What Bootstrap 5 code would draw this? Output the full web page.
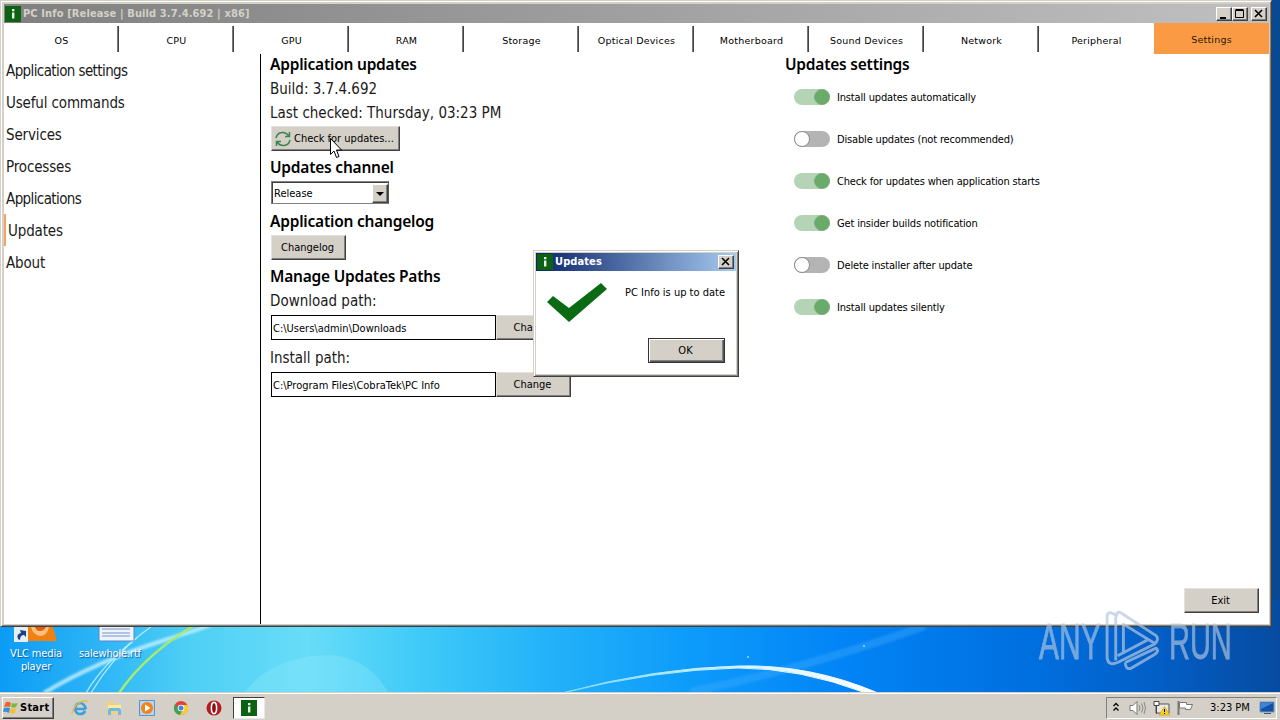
<!DOCTYPE html>
<html lang="en">
<head>
    <meta charset="UTF-8">
    <meta name="viewport" content="width=device-width, initial-scale=1.0">
    <title>PC Info</title>
    <link href="https://cdn.jsdelivr.net/npm/bootstrap@5.3.2/dist/css/bootstrap.min.css" rel="stylesheet">
    <style>
        body {
            width: 1280px;
            height: 720px;
            overflow: hidden;
            font-family: "DejaVu Sans Condensed", "DejaVu Sans", sans-serif;
            font-stretch: condensed;
            font-size: 11px;
            line-height: 14px;
            color: #000;
            background: #0b4a94;
        }
        .desktop { height: 692px; }
        .wallpaper { left: 0; top: 0; }
        .window {
            background: #d4d0c8;
            border: 1px solid;
            border-color: #d4d0c8 #404040 #404040 #d4d0c8;
            box-shadow: inset 1px 1px #fff, inset -1px -1px #808080;
        }
        .app-window { left: 0; top: 0; width: 1272px; height: 627px; padding: 3px 2px 3px 3px; }
        .titlebar {
            height: 18px;
            font-weight: bold;
            font-size: 11px;
        }
        .titlebar-off { height: 19px; background: linear-gradient(90deg, #808080, #c0c0c0); color: #d4d0c8; }
        .titlebar-on { background: linear-gradient(90deg, #0a246a, #a6caf0); color: #fff; }
        .app-title { margin-left: 1px; letter-spacing: .12px; }
        .dialog-title { margin-left: 1px; letter-spacing: .1px; }
        .win-btn {
            width: 16px;
            height: 14px;
            background: #d4d0c8;
            border: 1px solid;
            border-color: #fff #404040 #404040 #fff;
            box-shadow: inset -1px -1px #808080;
        }
        .win-close { margin-left: 3px; margin-right: 2px; }
        .tabs { height: 31px; background: #fff; }
        .tabs .nav-link {
            flex-shrink: 0;
            width: 115px;
            height: 31px;
            padding: 2px 0 0;
            font-family: "DejaVu Sans", sans-serif;
            font-stretch: normal;
            font-size: 9.5px;
            line-height: 31px;
            letter-spacing: .22px;
            text-align: center;
            color: #000;
            background: linear-gradient(90deg, #aaa, #444 50%) right 0 top 3px / 2px 26px no-repeat;
        }
        .tabs .nav-link:nth-child(10) { background: none; }
        .tabs .nav-link.active { background: #fa9a44; color: #2a1608; padding-top: 1px; }
        .app-body { height: 570px; background: #fff; }
        .sidebar { width: 257px; border-right: 1px solid #000; }
        .sidebar .nav-link {
            height: 32px;
            padding: 2px 0 0 2px;
            font-size: 15px;
            line-height: 31px;
            letter-spacing: -.15px;
            color: #1a1a1a;
        }
        .sidebar .nav-link.tight { letter-spacing: -.6px; }
        .sidebar .nav-link.active { border-left: 2px solid #f4a460; }
        .updates-col { width: 516px; padding-left: 10px; }
        .line-head, .line-text {
            height: 24px;
            margin: 0 0 0 -1px;
            font-size: 15px;
            line-height: 24px;
            white-space: nowrap;
            color: #000;
        }
        .line-head { font-size: 15.5px; letter-spacing: -.22px; font-family: "Noto Sans", sans-serif; font-stretch: normal; font-weight: 600; }
        .line-first { height: 22px; line-height: 20px; }
        .line-text { line-height: 26px; color: #1a1a1a; }
        .btn-win {
            --bs-btn-padding-x: 0;
            --bs-btn-padding-y: 0;
            --bs-btn-font-size: 11px;
            --bs-btn-line-height: 14px;
            --bs-btn-color: #000;
            --bs-btn-border-radius: 0;
            background: #d4d0c8;
            height: 25px;
            padding: 1px 2px 0 0;
            border: 1px solid;
            border-color: #e4e1dc #404040 #404040 #e4e1dc;
            box-shadow: inset -1px -1px #808080;
        }
        .btn-check-upd { width: 129px; margin-top: 2px; padding-left: 3px; gap: 3px; }
        .btn-w75 { width: 75px; }
        .channel {
            width: 118px;
            height: 23px;
            margin-top: 2px;
            border: 1px solid #808080;
            border-color: #808080 #555 #808080 #808080;
            box-shadow: inset 1px 1px #404040;
            padding: 2px 0 1px 2px;
        }
        .channel-value { padding-top: 2px; }
        .drop-btn { width: 16px; height: 19px; background: #d4d0c8; border: 1px solid; border-color: #fff #404040 #404040 #fff; box-shadow: inset -1px -1px #808080; }
        .path-input {
            width: 225px;
            height: 25px;
            padding: 1px 1px 0;
            border: 1px solid #000;
            border-radius: 0;
            font-size: 11px;
            color: #000;
        }
        .mt-2px { margin-top: 2px; }
        .mt-3px { margin-top: 3px; }
        .mt-4px { margin-top: 4px; }
        .mt-5px { margin-top: 5px; }
        .setting-row { height: 42px; padding-left: 9px; gap: 7px; letter-spacing: -.16px; }
        .setting-name { padding-top: 1px; }
        .switch-off, .switch-on { width: 36px; height: 16px; border-radius: 8px; background: #b4b4b4; }
        .switch-on { background: #b5d3b5; }
        .knob { width: 16px; height: 16px; border-radius: 50%; background: #fff; border: 1px solid #8c8c8c; }
        .switch-on .knob { background: #69ab69; border-color: #7eac7e; }
        .exit-btn { right: 10px; bottom: 11px; }
        .dialog { left: 533px; top: 250px; width: 206px; height: 127px; padding: 2px; }
        .dialog-body { height: 103px; background: #fff; padding: 0 11px 11px 0; }
        .dialog-msg { padding-top: 15px; text-align: right; }
        .btn-ok { width: 77px; border-color: #333; box-shadow: inset 1px 1px #fff, inset -1px -1px #555, inset -2px -2px #808080; }
        .desk-label { color: #fff; text-align: center; line-height: 13px; letter-spacing: -.15px; text-shadow: 1px 1px 1px #0458a0; }
        .desk-icons { left: 0; top: 627px; }
        .watermark { left: 1030px; top: 600px; }
        .pointer { left: 330px; top: 138px; }
        .taskbar { height: 28px; background: #d4d0c8; border-top: 1px solid #d4d0c8; box-shadow: inset 0 1px #fff; padding: 4px 3px 1px 2px; }
        .start-btn { width: 52px; height: 22px; font-weight: bold; background: #d4d0c8; border: 1px solid; border-color: #fff #404040 #404040 #fff; box-shadow: inset -1px -1px #808080; }
        .start-text { margin-left: 1px; letter-spacing: .25px; }
        .quick { margin-left: 16px; margin-top: 2px; gap: 13.6px; }
        .task-active { width: 32px; height: 22px; background: #fff; border: 1px solid; border-color: #404040 #e8e8e8 #e8e8e8 #404040; margin-left: 9px; }
        .tray { width: 171px; height: 22px; border: 1px solid; border-color: #808080 #fff #fff #808080; padding-left: 5px; }
    </style>
</head>
<body>
    <div class="desktop position-relative">
        <svg class="wallpaper position-absolute" width="1280" height="692" viewBox="0 0 1280 692">
            <defs>
                <linearGradient id="sky" x1="0" x2="1">
                    <stop offset="0" stop-color="#0c9cf6"/>
                    <stop offset=".07" stop-color="#2ab2f6"/>
                    <stop offset=".15" stop-color="#4fd0f5"/>
                    <stop offset=".24" stop-color="#68dcf8"/>
                    <stop offset=".32" stop-color="#42ccf8"/>
                    <stop offset=".42" stop-color="#25b4f8"/>
                    <stop offset=".54" stop-color="#0d9bfb"/>
                    <stop offset=".66" stop-color="#0284f6"/>
                    <stop offset=".8" stop-color="#0070e0"/>
                    <stop offset=".9" stop-color="#035fc8"/>
                    <stop offset="1" stop-color="#064ba0"/>
                </linearGradient>
                <linearGradient id="arc" x1="0" x2="1">
                    <stop offset="0" stop-color="#7fd8ff"/>
                    <stop offset=".6" stop-color="#d8f4ff"/>
                    <stop offset="1" stop-color="#fff"/>
                </linearGradient>
                <filter id="soft"><feGaussianBlur stdDeviation="1.2"/></filter>
            </defs>
            <rect width="1280" height="692" fill="url(#sky)"/>
            <rect x="1270" width="10" height="600" fill="#0b4788" opacity=".6"/>
            <path d="M245 692C265 664 300 655 332 655C358 658 375 670 388 692Z" fill="#9ff0fa" opacity=".25"/>
            <path d="M44 693Q95 662 165 640T200 626" fill="none" stroke="#c8f2ff" stroke-width="4" opacity=".8" filter="url(#soft)"/>
            <path d="M86 693Q105 660 152 626M91 693Q112 658 140 635" fill="none" stroke="#b0ecff" stroke-width="1.2"/>
            <path d="M119 693Q145 655 193 626" fill="none" stroke="#a6ec6c" stroke-width="2.5"/>
            <path d="M690 692Q800 670 925 626" fill="none" stroke="#4ab0ff" stroke-width="8" opacity=".35" filter="url(#soft)"/>
            <path d="M562 693Q655 668 738 666Q810 664 878 693L866 693Q800 668 738 668Q655 670 562 693Z" fill="url(#arc)" stroke="url(#arc)" stroke-width="1"/>
            <circle cx="748" cy="657" r="1" fill="#9de"/><circle cx="864" cy="646" r="1" fill="#9de"/>
        </svg>

        <!-- Desktop shortcuts -->
        <div class="desk-icons position-absolute d-flex">
            <div class="desk-label" style="width: 72px">
                <svg class="d-block" width="72" height="20" viewBox="0 0 72 20">
                    <path d="M28 0H53L57 14H26Z" fill="#f08010"/><path d="M31 0H49Q47 9 40 9Q33 8 31 0Z" fill="#ffc080"/><path d="M35 0H46Q44 4 40 4T35 0Z" fill="#e85c08"/>
                    <rect x="14" y="0" width="14" height="15" fill="#e8edf2"/><path d="M18 12Q16 7 21 6L20 3L26 4V10L24 8Q20 8 20 13Z" fill="#16428c"/>
                </svg>
                VLC media<br>player
            </div>
            <div class="desk-label" style="width: 76px">
                <svg class="d-block" width="76" height="20" viewBox="0 0 76 20">
                    <path d="M27 -2H62V14H27Z" fill="#eef4fc" stroke="#5e86c8"/><path d="M30 2H58M30 6H58M30 9H58" stroke="#7790c8"/>
                </svg>
                salewhole.rtf
            </div>
        </div>

        <!-- Main application window -->
        <div class="app-window window position-absolute">
            <div class="titlebar titlebar-off d-flex align-items-center">
                <svg width="18" height="18" viewBox="0 0 18 18"><rect x="1" y="1" width="16" height="16" fill="#0c6212"/><path d="M8 4h2.4v2.3H8zM8 7.5h2.4v6H8z" fill="#e8f2e4"/></svg>
                <span class="app-title">PC Info [Release | Build 3.7.4.692 | x86]</span>
                <div class="d-flex ms-auto">
                    <span class="win-btn d-flex"><svg width="14" height="12"><path d="M3 9h6v2H3z"/></svg></span>
                    <span class="win-btn d-flex"><svg width="14" height="12"><path d="M2.5 2.5h8v7h-8zM2.5 1.5h8" fill="none" stroke="#000"/></svg></span>
                    <span class="win-btn win-close d-flex"><svg width="14" height="12"><path d="M3 2l7 7M10 2l-7 7" stroke="#000" stroke-width="1.6"/></svg></span>
                </div>
            </div>
            <nav class="tabs nav flex-nowrap">
                <a class="nav-link">OS</a>
                <a class="nav-link">CPU</a>
                <a class="nav-link">GPU</a>
                <a class="nav-link">RAM</a>
                <a class="nav-link">Storage</a>
                <a class="nav-link">Optical Devices</a>
                <a class="nav-link">Motherboard</a>
                <a class="nav-link">Sound Devices</a>
                <a class="nav-link">Network</a>
                <a class="nav-link">Peripheral</a>
                <a class="nav-link active">Settings</a>
            </nav>
            <div class="app-body position-relative d-flex">
                <nav class="sidebar nav flex-column flex-shrink-0">
                    <a class="nav-link tight">Application settings</a>
                    <a class="nav-link">Useful commands</a>
                    <a class="nav-link">Services</a>
                    <a class="nav-link">Processes</a>
                    <a class="nav-link tight">Applications</a>
                    <a class="nav-link active">Updates</a>
                    <a class="nav-link">About</a>
                </nav>

                <div class="updates-col flex-shrink-0">
                    <h2 class="line-head line-first">Application updates</h2>
                    <p class="line-text">Build: 3.7.4.692</p>
                    <p class="line-text">Last checked: Thursday, 03:23 PM</p>
                    <button class="btn btn-win btn-check-upd d-flex align-items-center">
                        <svg width="16" height="16" viewBox="0 0 16 16" fill="none" stroke="#3c8450" stroke-width="1.5"><path d="M1 7Q2 2 7 1.5Q11 1 14 5M14.5 1V5.5H10M15 9Q14 14 9 14.5Q5 15 2 11M1.5 15V10.5H6"/></svg>
                        Check for updates...
                    </button>
                    <h2 class="line-head mt-4px">Updates channel</h2>
                    <div class="channel d-flex align-items-center justify-content-between">
                        <span class="channel-value">Release</span>
                        <span class="drop-btn d-flex"><svg width="14" height="17"><path d="M3 7h8l-4 4z"/></svg></span>
                    </div>
                    <h2 class="line-head mt-5px">Application changelog</h2>
                    <button class="btn btn-win btn-w75 d-block mt-2px">Changelog</button>
                    <h2 class="line-head mt-4px">Manage Updates Paths</h2>
                    <p class="line-text">Download path:</p>
                    <div class="d-flex mt-3px">
                        <input class="form-control path-input" value="C:\Users\admin\Downloads">
                        <button class="btn btn-win btn-w75">Change</button>
                    </div>
                    <p class="line-text mt-5px">Install path:</p>
                    <div class="d-flex mt-3px">
                        <input class="form-control path-input" value="C:\Program Files\CobraTek\PC Info">
                        <button class="btn btn-win btn-w75">Change</button>
                    </div>
                </div>

                <div class="settings-col ms-2">
                    <h2 class="line-head line-first ms-0">Updates settings</h2>
                    <div class="setting-row d-flex align-items-center"><span class="switch-on d-flex justify-content-end"><span class="knob"></span></span><span class="setting-name">Install updates automatically</span></div>
                    <div class="setting-row d-flex align-items-center"><span class="switch-off d-flex"><span class="knob"></span></span><span class="setting-name">Disable updates (not recommended)</span></div>
                    <div class="setting-row d-flex align-items-center"><span class="switch-on d-flex justify-content-end"><span class="knob"></span></span><span class="setting-name">Check for updates when application starts</span></div>
                    <div class="setting-row d-flex align-items-center"><span class="switch-on d-flex justify-content-end"><span class="knob"></span></span><span class="setting-name">Get insider builds notification</span></div>
                    <div class="setting-row d-flex align-items-center"><span class="switch-off d-flex"><span class="knob"></span></span><span class="setting-name">Delete installer after update</span></div>
                    <div class="setting-row d-flex align-items-center"><span class="switch-on d-flex justify-content-end"><span class="knob"></span></span><span class="setting-name">Install updates silently</span></div>
                </div>
                <button class="btn btn-win btn-w75 exit-btn position-absolute">Exit</button>
            </div>
        </div>

        <!-- Message box -->
        <div class="dialog window position-absolute">
            <div class="titlebar titlebar-on d-flex align-items-center">
                <svg width="18" height="18" viewBox="0 0 18 18"><rect x="1" y="1" width="16" height="16" fill="#0c6212"/><path d="M8 4h2.4v2.3H8zM8 7.5h2.4v6H8z" fill="#e8f2e4"/></svg>
                <span class="dialog-title">Updates</span>
                <span class="win-btn win-close d-flex ms-auto"><svg width="14" height="12"><path d="M3 2l7 7M10 2l-7 7" stroke="#000" stroke-width="1.6"/></svg></span>
            </div>
            <div class="dialog-body d-flex">
                <svg class="flex-shrink-0" width="76" height="60" viewBox="0 0 76 60"><path d="M11 31L17 25L33 37L65 12L71 18L33 51Z" fill="#0b6b14"/></svg>
                <div class="d-flex flex-column flex-grow-1">
                    <div class="dialog-msg">PC Info is up to date</div>
                    <button class="btn btn-win btn-ok mt-auto ms-auto">OK</button>
                </div>
            </div>
        </div>

        <svg class="watermark position-absolute" width="240" height="80" viewBox="0 0 240 80">
            <g fill="#b4c8e0" stroke="#b4c8e0" stroke-width=".8" opacity=".65" font-family="Liberation Sans" font-size="50">
                <text transform="translate(9 59) scale(.6 1)">ANY</text>
                <text transform="translate(139 59) scale(.58 1)">RUN</text>
            </g>
            <path d="M73 57V15Q73 8 79 11L84 14M82 60V15Q83 6 90 12L124 34Q128 38 122 43L84 62Q74 66 73 57M90 53V22L124 43M84 55L116 38M92 62L124 47Q128 50 122 54L98 68Q92 70 92 62" transform="translate(7 3) scale(.96)" fill="none" stroke="#b4c8e0" stroke-width="3" stroke-linejoin="round" opacity=".7"/>
        </svg>

        <svg class="pointer position-absolute" width="14" height="22" viewBox="0 0 14 22"><path d="M.5 .5V16.5L4 13L6.5 19.5L9 18.5L6.5 12H11.5Z" fill="#fff" stroke="#000"/></svg>
    </div>

    <div class="taskbar d-flex align-items-start">
        <div class="start-btn d-flex align-items-center">
            <svg width="16" height="16" viewBox="0 0 16 16"><path d="M3 2Q5 1 8 3L7 7Q4 6 1 7Z" fill="#e8642c"/><path d="M9 3Q12 4 15 3L13 7Q11 8 8 7Z" fill="#7cb83c"/><path d="M1 8Q4 7 7 8L6 13Q3 11 0 12Z" fill="#3c8cd8"/><path d="M8 8Q11 9 13 8L12 13Q9 14 7 13Z" fill="#f4c030"/></svg>
            <span class="start-text">Start</span>
        </div>
        <div class="quick d-flex align-items-center">
            <svg width="20" height="18" viewBox="0 0 20 18" fill="none"><path d="M16 10H5Q6 4 10 4T16 10M5 10Q6 15 10 15Q14 15 15 12" stroke="#3ba0e0" stroke-width="2.6"/><path d="M2 15Q3 8 9 4T18 3" stroke="#e8bc40" stroke-width="1.5"/></svg>
            <svg width="20" height="18" viewBox="0 0 20 18"><path d="M3 3h6l1 2h7v10H3z" fill="#f2d478"/><path d="M4 6h13v4H4z" fill="#fbeaa8"/><path d="M4 16v-5q0-2 2-2h9q2 0 2 2v5h-3v-4H7v4z" fill="#72b8e4"/></svg>
            <svg width="20" height="18" viewBox="0 0 20 18"><path d="M2.5 1.5h15v15h-15z" fill="#b8d4f0" stroke="#5894d0"/><circle cx="10" cy="9" r="6" fill="#f08418"/><path d="M8 5.5v7l5.5-3.5z" fill="#fff"/></svg>
            <svg width="20" height="18" viewBox="0 0 20 18"><circle cx="10" cy="9" r="7" fill="#e04434"/><path d="M3.9 5.5A7 7 0 0 0 9 16L12 10H8z" fill="#3ca454"/><path d="M9 16A7 7 0 0 0 16.5 6H10l2 4z" fill="#f8cc34"/><circle cx="10" cy="9" r="3.3" fill="#fff"/><circle cx="10" cy="9" r="2.5" fill="#4484e4"/></svg>
            <svg width="20" height="18" viewBox="0 0 20 18"><circle cx="10" cy="9" r="7.5" fill="#b81820"/><ellipse cx="10" cy="9" rx="2.6" ry="5.6" fill="#801014" stroke="#fff" stroke-width="1.6"/></svg>
        </div>
        <div class="task-active d-flex align-items-center justify-content-center">
            <svg width="16" height="16" viewBox="1 1 16 16"><rect x="1" y="1" width="16" height="16" fill="#0c6212"/><path d="M8 4h2.4v2.3H8zM8 7.5h2.4v6H8z" fill="#e8f2e4"/></svg>
        </div>
        <div class="tray d-flex align-items-center ms-auto">
            <svg width="98" height="20" viewBox="0 0 98 20" fill="none">
                <path d="M1.5 8L4 5.5L6.5 8M1.5 12.5L4 10L6.5 12.5" stroke="#000" stroke-width="1.3"/>
                <path d="M18 7.5h3l4-4v13l-4-4h-3z" fill="#fff" stroke="#777"/><path d="M27 7q2 3 0 6M29.5 5.5q3 4 0 9M32 4q3 6 0 12" stroke="#888"/>
                <path d="M44 6h13v9H44z" fill="#e8e8e8" stroke="#555"/><path d="M42 3.5h5v4h-5zM44.5 8v8" fill="#fff" stroke="#444"/><path d="M52.5 8.5L58 17H47z" fill="#f8d020" stroke="#c89808" stroke-width=".6"/><path d="M52.5 11v3M52.5 15v1" stroke="#000"/>
                <path d="M66.5 3v14" stroke="#777" stroke-width="2"/><path d="M67.5 4.5h7v2h6l-2 5h-5v-1.5h-6z" fill="#fff" stroke="#777"/>
            </svg>
            <span class="clock">3:23 PM</span>
            <svg class="ms-auto" width="17" height="16" viewBox="0 0 17 16"><path d="M1 2h14v10H1z" fill="#1450a4" stroke="#7098c8"/><path d="M2 3h12L2 9z" fill="#3c84d8"/><path d="M5 13h7v1H5z" fill="#456"/></svg>
        </div>
    </div>

    <script src="https://cdn.jsdelivr.net/npm/bootstrap@5.3.2/dist/js/bootstrap.bundle.min.js"></script>
</body>
</html>
